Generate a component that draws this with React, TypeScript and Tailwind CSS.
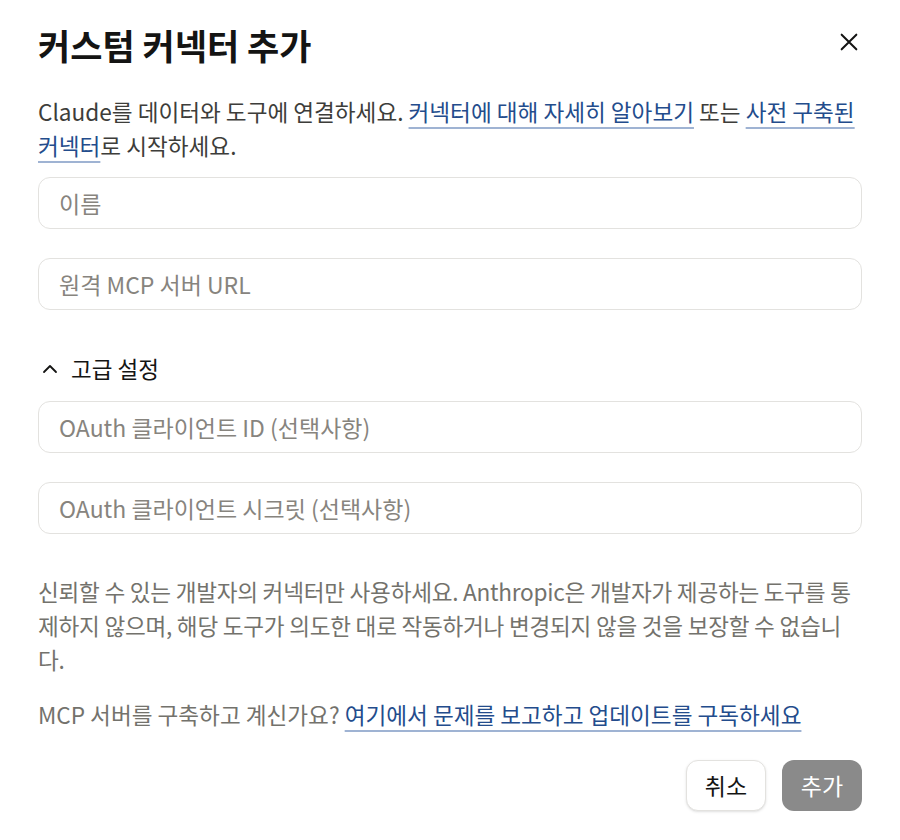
import React from 'react';

const font = { fontFamily: '"Noto Sans CJK KR", "Noto Sans", sans-serif' };

const inputClass =
  'block w-full h-[52px] rounded-xl border-[1.5px] border-[#e3e2df] bg-white px-5 text-[23px] text-[#1a1a1a] placeholder:text-[#87847e] outline-none';

const linkClass =
  'text-[#234c8c] underline decoration-[#9fb3d3] decoration-2 underline-offset-[6px]';

export default function App() {
  return (
    <div className="w-[900px] h-[840px] bg-white" style={font}>
      <div className="px-[38px] pt-[22px]">
        <div className="flex items-center justify-between">
          <h1 className="text-[35px] leading-[46px] font-bold text-[#141413]">커스텀 커넥터 추가</h1>
          <button className="mr-[2px] -mt-[6px] text-[#141413]">
            <svg width="22" height="22" viewBox="0 0 24 24" fill="none" stroke="currentColor" strokeWidth="2.2" strokeLinecap="round">
              <path d="M4 4L20 20M20 4L4 20" />
            </svg>
          </button>
        </div>

        <p className="mt-[27px] text-[22.6px] leading-[34px] text-[#3d3d3a]">
          Claude를 데이터와 도구에 연결하세요. <a className={linkClass}>커넥터에 대해 자세히 알아보기</a> 또는{' '}
          <a className={linkClass}>사전 구축된 커넥터</a>로 시작하세요.
        </p>

        <input className={`${inputClass} mt-[14px]`} placeholder="이름" />
        <input className={`${inputClass} mt-[29px]`} placeholder="원격 MCP 서버 URL" />

        <button className="mt-[42px] flex h-[34px] items-center gap-[12px] pl-[3px] text-[22.5px] text-[#141413]">
          <svg width="18" height="18" viewBox="0 0 24 24" fill="none" stroke="currentColor" strokeWidth="2.4" strokeLinecap="round" strokeLinejoin="round">
            <path d="M4 16L12 8L20 16" />
          </svg>
          <span>고급 설정</span>
        </button>

        <input className={`${inputClass} mt-[15px]`} placeholder="OAuth 클라이언트 ID (선택사항)" />
        <input className={`${inputClass} mt-[29px]`} placeholder="OAuth 클라이언트 시크릿 (선택사항)" />

        <p className="mt-[41px] text-[22.6px] leading-[34px] tracking-[-0.25px] text-[#73726c]">
          신뢰할 수 있는 개발자의 커넥터만 사용하세요. Anthropic은 개발자가 제공하는 도구를 통제하지 않으며, 해당 도구가 의도한 대로 작동하거나 변경되지 않을 것을 보장할 수 없습니다.
        </p>

        <p className="mt-[21px] text-[22.6px] leading-[34px] text-[#73726c]">
          MCP 서버를 구축하고 계신가요? <a className={linkClass}>여기에서 문제를 보고하고 업데이트를 구독하세요</a>
        </p>

        <div className="mt-[28px] flex justify-end gap-4">
          <button className="h-[51px] w-[80px] rounded-xl border-[1.5px] border-[#e3e2df] bg-white text-[23px] text-[#141413] shadow-sm">
            취소
          </button>
          <button className="h-[51px] w-[80px] rounded-xl bg-[#8a8a8a] text-[23px] text-white">추가</button>
        </div>
      </div>
    </div>
  );
}
